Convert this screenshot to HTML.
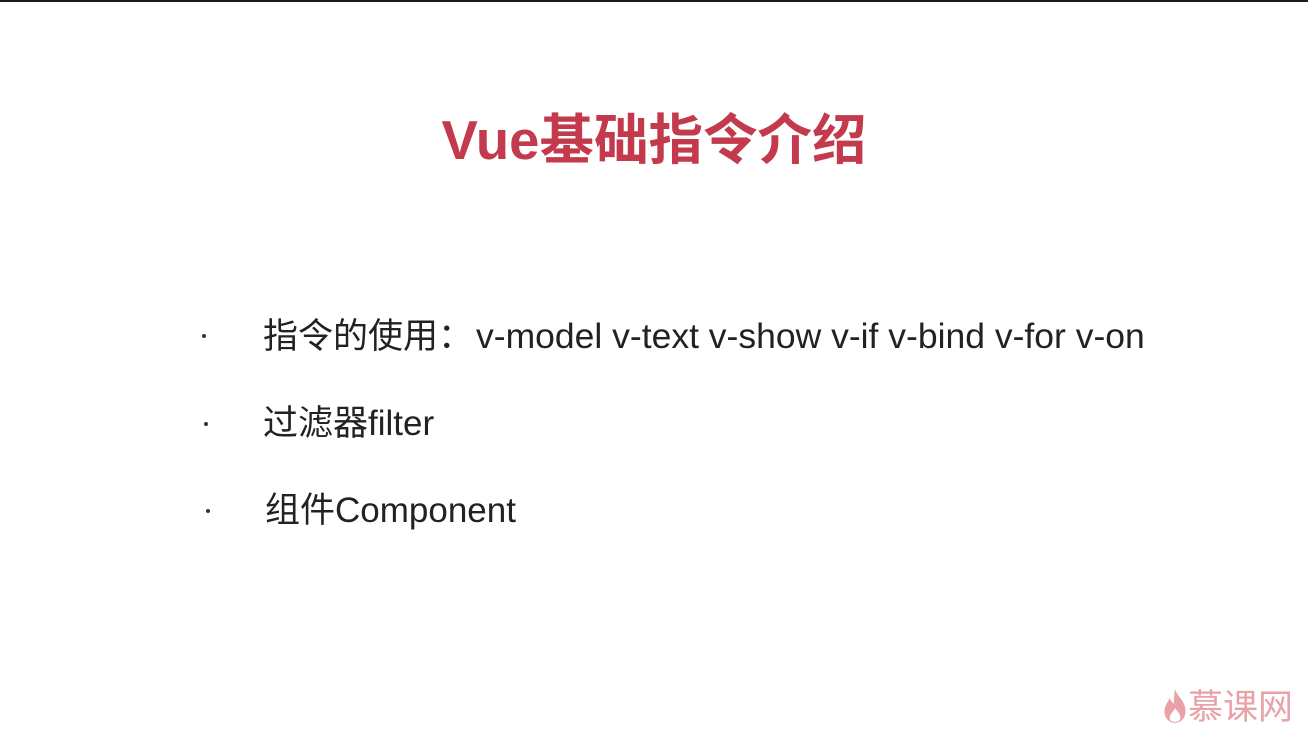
<!DOCTYPE html>
<html><head><meta charset="utf-8"><style>
body{margin:0;width:1308px;height:736px;background:#fff;position:relative;overflow:hidden;font-family:"Liberation Sans","Noto Sans CJK SC",sans-serif;}
.top{position:absolute;left:0;top:0;width:1308px;height:2px;background:#1a1d1e}
.title{position:absolute;left:0;width:1308px;top:106px;text-align:center;font-size:54.5px;font-weight:bold;color:#c23a4c;line-height:70px;padding-left:0}
.item{position:absolute;left:263px;font-size:35px;color:#222;line-height:40px;white-space:nowrap}
.dot{position:absolute;width:4px;height:4px;background:#333;border-radius:50%}
.logo{position:absolute;left:1162px;top:686px;font-size:35px;color:#e8a2a8;line-height:44px}
</style></head><body>
<div class="top"></div>
<div class="title">Vue基础指令介绍</div>
<div class="dot" style="left:202px;top:334px"></div>
<div class="item" style="top:316px">指令的使用：<span style="margin-left:3px;font-size:35.5px">v-model v-text v-show v-if v-bind v-for v-on</span></div>
<div class="dot" style="left:204px;top:422px"></div>
<div class="item" style="top:404px">过滤器filter</div>
<div class="dot" style="left:206px;top:509px"></div>
<div class="item" style="top:491px;left:265px">组件Component</div>
<div class="logo"><svg width="26" height="38" viewBox="0 0 24 36" style="vertical-align:-6px"><path d="M12 2C14 9 22 13 22 23c0 7-5 11-10 11S2 30 2 23c0-6 4-9 5-13 1 4 3 5 4 6 0-5 0-9 1-14z" fill="#e8a2a8"/><path d="M12 20c2 3 5 5 5 9 0 3-2 4-5 4s-5-1-5-4c0-3 3-5 5-9z" fill="#fff"/></svg>慕课网</div>
</body></html>
